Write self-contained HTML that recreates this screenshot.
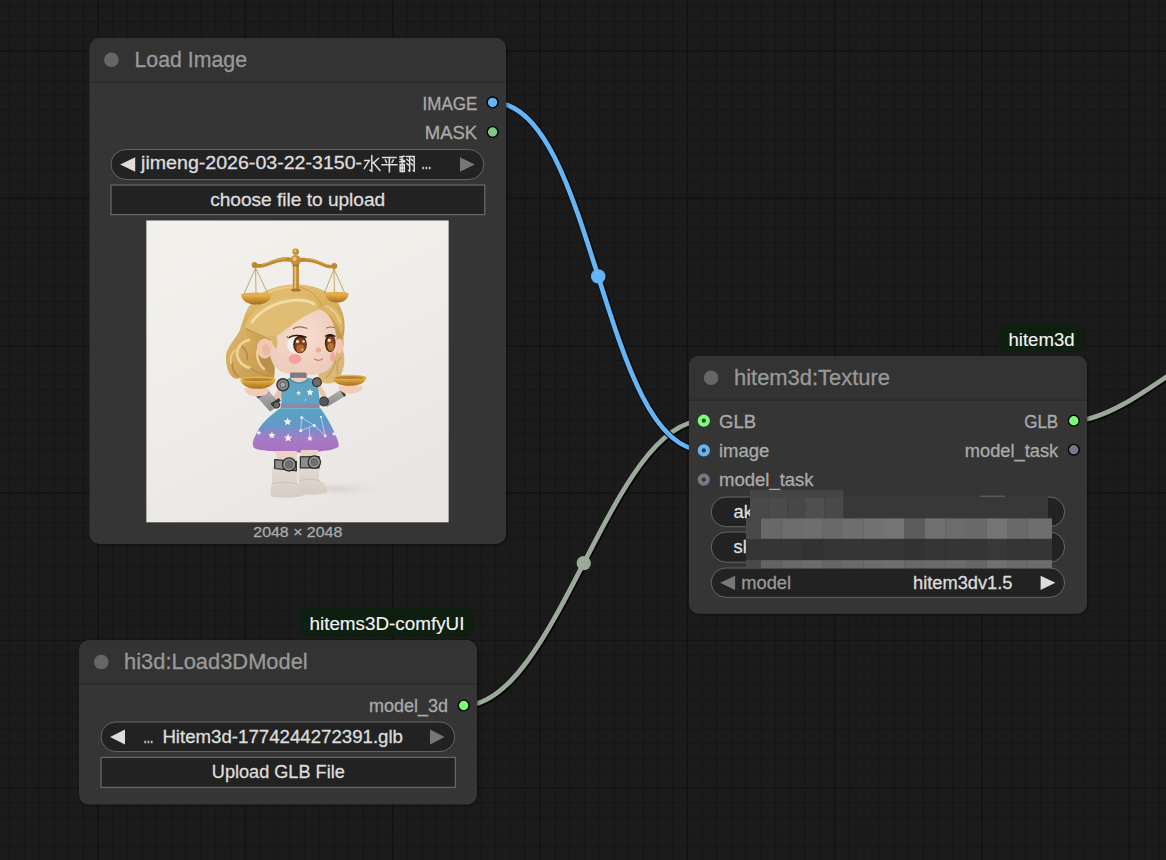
<!DOCTYPE html><html><head><meta charset="utf-8"><style>html,body{margin:0;padding:0;background:#1b1b1b;width:1166px;height:860px;overflow:hidden}svg{display:block}text{font-family:"Liberation Sans", sans-serif}</style></head><body>
<svg width="1166" height="860" viewBox="0 0 1166 860">
<defs><filter id="soft" x="0" y="0" width="100%" height="100%"><feGaussianBlur stdDeviation="0.35"/></filter><filter id="soft2" x="-2%" y="-5%" width="104%" height="110%"><feGaussianBlur stdDeviation="0.6"/></filter><filter id="sh" x="-5%" y="-5%" width="110%" height="110%"><feDropShadow dx="1" dy="1" stdDeviation="1.5" flood-color="#000" flood-opacity="0.55"/></filter></defs>
<rect width="1166" height="860" fill="#1b1b1b"/>
<g><line x1="9.48" y1="0" x2="9.48" y2="860" stroke="#171717" stroke-width="1"/><line x1="24.22" y1="0" x2="24.22" y2="860" stroke="#171717" stroke-width="1"/><line x1="38.95" y1="0" x2="38.95" y2="860" stroke="#171717" stroke-width="1"/><line x1="53.69" y1="0" x2="53.69" y2="860" stroke="#171717" stroke-width="1"/><line x1="68.42" y1="0" x2="68.42" y2="860" stroke="#171717" stroke-width="1"/><line x1="83.16" y1="0" x2="83.16" y2="860" stroke="#171717" stroke-width="1"/><line x1="97.90" y1="0" x2="97.90" y2="860" stroke="#131313" stroke-width="1.6"/><line x1="112.63" y1="0" x2="112.63" y2="860" stroke="#171717" stroke-width="1"/><line x1="127.37" y1="0" x2="127.37" y2="860" stroke="#171717" stroke-width="1"/><line x1="142.10" y1="0" x2="142.10" y2="860" stroke="#171717" stroke-width="1"/><line x1="156.84" y1="0" x2="156.84" y2="860" stroke="#171717" stroke-width="1"/><line x1="171.58" y1="0" x2="171.58" y2="860" stroke="#171717" stroke-width="1"/><line x1="186.31" y1="0" x2="186.31" y2="860" stroke="#171717" stroke-width="1"/><line x1="201.05" y1="0" x2="201.05" y2="860" stroke="#171717" stroke-width="1"/><line x1="215.78" y1="0" x2="215.78" y2="860" stroke="#171717" stroke-width="1"/><line x1="230.52" y1="0" x2="230.52" y2="860" stroke="#171717" stroke-width="1"/><line x1="245.26" y1="0" x2="245.26" y2="860" stroke="#131313" stroke-width="1.6"/><line x1="259.99" y1="0" x2="259.99" y2="860" stroke="#171717" stroke-width="1"/><line x1="274.73" y1="0" x2="274.73" y2="860" stroke="#171717" stroke-width="1"/><line x1="289.46" y1="0" x2="289.46" y2="860" stroke="#171717" stroke-width="1"/><line x1="304.20" y1="0" x2="304.20" y2="860" stroke="#171717" stroke-width="1"/><line x1="318.94" y1="0" x2="318.94" y2="860" stroke="#171717" stroke-width="1"/><line x1="333.67" y1="0" x2="333.67" y2="860" stroke="#171717" stroke-width="1"/><line x1="348.41" y1="0" x2="348.41" y2="860" stroke="#171717" stroke-width="1"/><line x1="363.14" y1="0" x2="363.14" y2="860" stroke="#171717" stroke-width="1"/><line x1="377.88" y1="0" x2="377.88" y2="860" stroke="#171717" stroke-width="1"/><line x1="392.62" y1="0" x2="392.62" y2="860" stroke="#131313" stroke-width="1.6"/><line x1="407.35" y1="0" x2="407.35" y2="860" stroke="#171717" stroke-width="1"/><line x1="422.09" y1="0" x2="422.09" y2="860" stroke="#171717" stroke-width="1"/><line x1="436.82" y1="0" x2="436.82" y2="860" stroke="#171717" stroke-width="1"/><line x1="451.56" y1="0" x2="451.56" y2="860" stroke="#171717" stroke-width="1"/><line x1="466.30" y1="0" x2="466.30" y2="860" stroke="#171717" stroke-width="1"/><line x1="481.03" y1="0" x2="481.03" y2="860" stroke="#171717" stroke-width="1"/><line x1="495.77" y1="0" x2="495.77" y2="860" stroke="#171717" stroke-width="1"/><line x1="510.50" y1="0" x2="510.50" y2="860" stroke="#171717" stroke-width="1"/><line x1="525.24" y1="0" x2="525.24" y2="860" stroke="#171717" stroke-width="1"/><line x1="539.98" y1="0" x2="539.98" y2="860" stroke="#131313" stroke-width="1.6"/><line x1="554.71" y1="0" x2="554.71" y2="860" stroke="#171717" stroke-width="1"/><line x1="569.45" y1="0" x2="569.45" y2="860" stroke="#171717" stroke-width="1"/><line x1="584.18" y1="0" x2="584.18" y2="860" stroke="#171717" stroke-width="1"/><line x1="598.92" y1="0" x2="598.92" y2="860" stroke="#171717" stroke-width="1"/><line x1="613.66" y1="0" x2="613.66" y2="860" stroke="#171717" stroke-width="1"/><line x1="628.39" y1="0" x2="628.39" y2="860" stroke="#171717" stroke-width="1"/><line x1="643.13" y1="0" x2="643.13" y2="860" stroke="#171717" stroke-width="1"/><line x1="657.86" y1="0" x2="657.86" y2="860" stroke="#171717" stroke-width="1"/><line x1="672.60" y1="0" x2="672.60" y2="860" stroke="#171717" stroke-width="1"/><line x1="687.34" y1="0" x2="687.34" y2="860" stroke="#131313" stroke-width="1.6"/><line x1="702.07" y1="0" x2="702.07" y2="860" stroke="#171717" stroke-width="1"/><line x1="716.81" y1="0" x2="716.81" y2="860" stroke="#171717" stroke-width="1"/><line x1="731.54" y1="0" x2="731.54" y2="860" stroke="#171717" stroke-width="1"/><line x1="746.28" y1="0" x2="746.28" y2="860" stroke="#171717" stroke-width="1"/><line x1="761.02" y1="0" x2="761.02" y2="860" stroke="#171717" stroke-width="1"/><line x1="775.75" y1="0" x2="775.75" y2="860" stroke="#171717" stroke-width="1"/><line x1="790.49" y1="0" x2="790.49" y2="860" stroke="#171717" stroke-width="1"/><line x1="805.22" y1="0" x2="805.22" y2="860" stroke="#171717" stroke-width="1"/><line x1="819.96" y1="0" x2="819.96" y2="860" stroke="#171717" stroke-width="1"/><line x1="834.70" y1="0" x2="834.70" y2="860" stroke="#131313" stroke-width="1.6"/><line x1="849.43" y1="0" x2="849.43" y2="860" stroke="#171717" stroke-width="1"/><line x1="864.17" y1="0" x2="864.17" y2="860" stroke="#171717" stroke-width="1"/><line x1="878.90" y1="0" x2="878.90" y2="860" stroke="#171717" stroke-width="1"/><line x1="893.64" y1="0" x2="893.64" y2="860" stroke="#171717" stroke-width="1"/><line x1="908.38" y1="0" x2="908.38" y2="860" stroke="#171717" stroke-width="1"/><line x1="923.11" y1="0" x2="923.11" y2="860" stroke="#171717" stroke-width="1"/><line x1="937.85" y1="0" x2="937.85" y2="860" stroke="#171717" stroke-width="1"/><line x1="952.58" y1="0" x2="952.58" y2="860" stroke="#171717" stroke-width="1"/><line x1="967.32" y1="0" x2="967.32" y2="860" stroke="#171717" stroke-width="1"/><line x1="982.06" y1="0" x2="982.06" y2="860" stroke="#131313" stroke-width="1.6"/><line x1="996.79" y1="0" x2="996.79" y2="860" stroke="#171717" stroke-width="1"/><line x1="1011.53" y1="0" x2="1011.53" y2="860" stroke="#171717" stroke-width="1"/><line x1="1026.26" y1="0" x2="1026.26" y2="860" stroke="#171717" stroke-width="1"/><line x1="1041.00" y1="0" x2="1041.00" y2="860" stroke="#171717" stroke-width="1"/><line x1="1055.74" y1="0" x2="1055.74" y2="860" stroke="#171717" stroke-width="1"/><line x1="1070.47" y1="0" x2="1070.47" y2="860" stroke="#171717" stroke-width="1"/><line x1="1085.21" y1="0" x2="1085.21" y2="860" stroke="#171717" stroke-width="1"/><line x1="1099.94" y1="0" x2="1099.94" y2="860" stroke="#171717" stroke-width="1"/><line x1="1114.68" y1="0" x2="1114.68" y2="860" stroke="#171717" stroke-width="1"/><line x1="1129.42" y1="0" x2="1129.42" y2="860" stroke="#131313" stroke-width="1.6"/><line x1="1144.15" y1="0" x2="1144.15" y2="860" stroke="#171717" stroke-width="1"/><line x1="1158.89" y1="0" x2="1158.89" y2="860" stroke="#171717" stroke-width="1"/><line x1="0" y1="6.80" x2="1166" y2="6.80" stroke="#171717" stroke-width="1"/><line x1="0" y1="21.54" x2="1166" y2="21.54" stroke="#171717" stroke-width="1"/><line x1="0" y1="36.27" x2="1166" y2="36.27" stroke="#171717" stroke-width="1"/><line x1="0" y1="51.01" x2="1166" y2="51.01" stroke="#131313" stroke-width="1.6"/><line x1="0" y1="65.74" x2="1166" y2="65.74" stroke="#171717" stroke-width="1"/><line x1="0" y1="80.48" x2="1166" y2="80.48" stroke="#171717" stroke-width="1"/><line x1="0" y1="95.22" x2="1166" y2="95.22" stroke="#171717" stroke-width="1"/><line x1="0" y1="109.95" x2="1166" y2="109.95" stroke="#171717" stroke-width="1"/><line x1="0" y1="124.69" x2="1166" y2="124.69" stroke="#171717" stroke-width="1"/><line x1="0" y1="139.42" x2="1166" y2="139.42" stroke="#171717" stroke-width="1"/><line x1="0" y1="154.16" x2="1166" y2="154.16" stroke="#171717" stroke-width="1"/><line x1="0" y1="168.90" x2="1166" y2="168.90" stroke="#171717" stroke-width="1"/><line x1="0" y1="183.63" x2="1166" y2="183.63" stroke="#171717" stroke-width="1"/><line x1="0" y1="198.37" x2="1166" y2="198.37" stroke="#131313" stroke-width="1.6"/><line x1="0" y1="213.10" x2="1166" y2="213.10" stroke="#171717" stroke-width="1"/><line x1="0" y1="227.84" x2="1166" y2="227.84" stroke="#171717" stroke-width="1"/><line x1="0" y1="242.58" x2="1166" y2="242.58" stroke="#171717" stroke-width="1"/><line x1="0" y1="257.31" x2="1166" y2="257.31" stroke="#171717" stroke-width="1"/><line x1="0" y1="272.05" x2="1166" y2="272.05" stroke="#171717" stroke-width="1"/><line x1="0" y1="286.78" x2="1166" y2="286.78" stroke="#171717" stroke-width="1"/><line x1="0" y1="301.52" x2="1166" y2="301.52" stroke="#171717" stroke-width="1"/><line x1="0" y1="316.26" x2="1166" y2="316.26" stroke="#171717" stroke-width="1"/><line x1="0" y1="330.99" x2="1166" y2="330.99" stroke="#171717" stroke-width="1"/><line x1="0" y1="345.73" x2="1166" y2="345.73" stroke="#131313" stroke-width="1.6"/><line x1="0" y1="360.46" x2="1166" y2="360.46" stroke="#171717" stroke-width="1"/><line x1="0" y1="375.20" x2="1166" y2="375.20" stroke="#171717" stroke-width="1"/><line x1="0" y1="389.94" x2="1166" y2="389.94" stroke="#171717" stroke-width="1"/><line x1="0" y1="404.67" x2="1166" y2="404.67" stroke="#171717" stroke-width="1"/><line x1="0" y1="419.41" x2="1166" y2="419.41" stroke="#171717" stroke-width="1"/><line x1="0" y1="434.14" x2="1166" y2="434.14" stroke="#171717" stroke-width="1"/><line x1="0" y1="448.88" x2="1166" y2="448.88" stroke="#171717" stroke-width="1"/><line x1="0" y1="463.62" x2="1166" y2="463.62" stroke="#171717" stroke-width="1"/><line x1="0" y1="478.35" x2="1166" y2="478.35" stroke="#171717" stroke-width="1"/><line x1="0" y1="493.09" x2="1166" y2="493.09" stroke="#131313" stroke-width="1.6"/><line x1="0" y1="507.82" x2="1166" y2="507.82" stroke="#171717" stroke-width="1"/><line x1="0" y1="522.56" x2="1166" y2="522.56" stroke="#171717" stroke-width="1"/><line x1="0" y1="537.30" x2="1166" y2="537.30" stroke="#171717" stroke-width="1"/><line x1="0" y1="552.03" x2="1166" y2="552.03" stroke="#171717" stroke-width="1"/><line x1="0" y1="566.77" x2="1166" y2="566.77" stroke="#171717" stroke-width="1"/><line x1="0" y1="581.50" x2="1166" y2="581.50" stroke="#171717" stroke-width="1"/><line x1="0" y1="596.24" x2="1166" y2="596.24" stroke="#171717" stroke-width="1"/><line x1="0" y1="610.98" x2="1166" y2="610.98" stroke="#171717" stroke-width="1"/><line x1="0" y1="625.71" x2="1166" y2="625.71" stroke="#171717" stroke-width="1"/><line x1="0" y1="640.45" x2="1166" y2="640.45" stroke="#131313" stroke-width="1.6"/><line x1="0" y1="655.18" x2="1166" y2="655.18" stroke="#171717" stroke-width="1"/><line x1="0" y1="669.92" x2="1166" y2="669.92" stroke="#171717" stroke-width="1"/><line x1="0" y1="684.66" x2="1166" y2="684.66" stroke="#171717" stroke-width="1"/><line x1="0" y1="699.39" x2="1166" y2="699.39" stroke="#171717" stroke-width="1"/><line x1="0" y1="714.13" x2="1166" y2="714.13" stroke="#171717" stroke-width="1"/><line x1="0" y1="728.86" x2="1166" y2="728.86" stroke="#171717" stroke-width="1"/><line x1="0" y1="743.60" x2="1166" y2="743.60" stroke="#171717" stroke-width="1"/><line x1="0" y1="758.34" x2="1166" y2="758.34" stroke="#171717" stroke-width="1"/><line x1="0" y1="773.07" x2="1166" y2="773.07" stroke="#171717" stroke-width="1"/><line x1="0" y1="787.81" x2="1166" y2="787.81" stroke="#131313" stroke-width="1.6"/><line x1="0" y1="802.54" x2="1166" y2="802.54" stroke="#171717" stroke-width="1"/><line x1="0" y1="817.28" x2="1166" y2="817.28" stroke="#171717" stroke-width="1"/><line x1="0" y1="832.02" x2="1166" y2="832.02" stroke="#171717" stroke-width="1"/><line x1="0" y1="846.75" x2="1166" y2="846.75" stroke="#171717" stroke-width="1"/></g>
<path d="M463.7,705.5 C556.8259395925754,705.5 610.6740604074246,420.7 703.8,420.7" fill="none" stroke="#000" stroke-opacity="0.8" stroke-width="7" transform="translate(0.6,0.6)"/>
<path d="M463.7,705.5 C556.8259395925754,705.5 610.6740604074246,420.7 703.8,420.7" fill="none" stroke="#9AA99A" stroke-width="4.8"/>
<circle cx="583.75" cy="563.10" r="7.2" fill="#9AA99A"/>
<path d="M492.6,102.4 C594.3685609606425,102.4 602.0314390393576,450.4 703.8,450.4" fill="none" stroke="#000" stroke-opacity="0.8" stroke-width="7" transform="translate(0.6,0.6)"/>
<path d="M492.6,102.4 C594.3685609606425,102.4 602.0314390393576,450.4 703.8,450.4" fill="none" stroke="#64B5F6" stroke-width="4.8"/>
<circle cx="598.20" cy="276.40" r="7.2" fill="#64B5F6"/>
<path d="M1073.8,420.7 C1132.8433791800571,420.7 1225.9566208199428,315 1285,315" fill="none" stroke="#000" stroke-opacity="0.8" stroke-width="7" transform="translate(0.6,0.6)"/>
<path d="M1073.8,420.7 C1132.8433791800571,420.7 1225.9566208199428,315 1285,315" fill="none" stroke="#9AA99A" stroke-width="4.8"/>
<g filter="url(#sh)"><rect x="89.5" y="38" width="416.5" height="506" rx="10" fill="#353535"/></g>
<path d="M89.5,82 V48 A10,10 0 0 1 99.5,38 H496.0 A10,10 0 0 1 506.0,48 V82 Z" fill="#333333"/>
<rect x="89.5" y="81.5" width="416.5" height="1.2" fill="#2a2a2a"/>
<circle cx="111.4" cy="59.8" r="7.3" fill="#666666"/>
<text x="134.5" y="66.7" font-size="21.6" fill="#999999" stroke="#999999" stroke-width="0.3" text-anchor="start" textLength="112.5" lengthAdjust="spacingAndGlyphs" >Load Image</text>
<text x="477.4" y="109.6" font-size="18.5" fill="#aaaaaa" stroke="#aaaaaa" stroke-width="0.3" text-anchor="end" textLength="54.8" lengthAdjust="spacingAndGlyphs" >IMAGE</text>
<text x="477.2" y="138.8" font-size="18.5" fill="#aaaaaa" stroke="#aaaaaa" stroke-width="0.3" text-anchor="end" >MASK</text>
<circle cx="492.6" cy="102.4" r="5.4" fill="#64B5F6" stroke="#000" stroke-width="1.4"/>
<circle cx="492.6" cy="132" r="5.4" fill="#81C784" stroke="#000" stroke-width="1.4"/>
<rect x="111" y="149.5" width="372.8" height="30.0" rx="15.0" fill="#222222" stroke="#666666" stroke-width="1"/>
<path d="M120.2,164.45 L135.2,157.2 L135.2,171.7 Z" fill="#dddddd"/>
<path d="M474.8,164.45 L460,157.2 L460,171.7 Z" fill="#777777"/>
<text x="141.1" y="168.9" font-size="17.6" fill="#dddddd" stroke="#dddddd" stroke-width="0.3" text-anchor="start" textLength="221" lengthAdjust="spacingAndGlyphs" >jimeng-2026-03-22-3150-</text>
<g stroke="#dddddd" stroke-width="1.5" fill="none" stroke-linecap="round"><path d="M371.8,155.5 V171.3 L369.8,170.2"/><path d="M364.5,160.6 H369.3 L364.2,168.6"/><path d="M378.6,158.3 L373.2,163.2"/><path d="M373.2,162.4 L380,170.5"/><path d="M382.5,157.4 H396.2"/><path d="M385.3,159.8 L386.6,162.5"/><path d="M393.4,159.8 L392,162.5"/><path d="M381.8,164.8 H397"/><path d="M389.4,157.4 V172"/><path d="M399.8,157 L404.3,156.2"/><path d="M400,159.3 L404.5,160.8"/><path d="M402.1,157.5 V163.2"/><path d="M399.6,161.8 H404.8"/><path d="M400.2,164.5 H404.3 V171.5 H400.2 Z"/><path d="M400.2,168 H404.3"/><path d="M402.2,164.5 V171.5"/><path d="M406.2,156.4 H409.7 V171 L408.6,170.5"/><path d="M406.8,159.3 L408.5,160.8"/><path d="M406.8,163.5 L408.5,165"/><path d="M410.6,156.4 H414.2 V171 L413.2,170.5"/><path d="M411.2,159.3 L412.9,160.8"/><path d="M411.2,163.5 L412.9,165"/></g>
<text x="421.5" y="168.9" font-size="17.6" fill="#dddddd" stroke="#dddddd" stroke-width="0.3" text-anchor="start" textLength="9.8" lengthAdjust="spacingAndGlyphs" >...</text>
<rect x="111" y="185" width="373.7" height="29.599999999999994" fill="#222222" stroke="#666666" stroke-width="1.3"/>
<text x="297.7" y="205.7" font-size="18.3" fill="#dddddd" stroke="#dddddd" stroke-width="0.3" text-anchor="middle" textLength="175" lengthAdjust="spacingAndGlyphs" >choose file to upload</text>
<defs><linearGradient id="bgimg" x1="0" y1="0" x2="0.5" y2="1"><stop offset="0" stop-color="#f2f1ec"/><stop offset="0.55" stop-color="#efede9"/><stop offset="1" stop-color="#e9e6e3"/></linearGradient><linearGradient id="dress" x1="0" y1="0" x2="0" y2="1"><stop offset="0" stop-color="#58a4c4"/><stop offset="0.38" stop-color="#6298c6"/><stop offset="0.66" stop-color="#a47cc6"/><stop offset="1" stop-color="#aa70c0"/></linearGradient><linearGradient id="hairg" x1="0" y1="0" x2="0.3" y2="1"><stop offset="0" stop-color="#e6c47a"/><stop offset="0.55" stop-color="#d8ae5e"/><stop offset="1" stop-color="#c4984e"/></linearGradient><linearGradient id="hairl" x1="0" y1="0" x2="1" y2="1"><stop offset="0" stop-color="#e2bd70"/><stop offset="1" stop-color="#c4964c"/></linearGradient><linearGradient id="gold" x1="0" y1="0" x2="0" y2="1"><stop offset="0" stop-color="#e9b650"/><stop offset="1" stop-color="#a96e1a"/></linearGradient><linearGradient id="boot" x1="0" y1="0" x2="0" y2="1"><stop offset="0" stop-color="#e2dbd4"/><stop offset="1" stop-color="#d6ccc4"/></linearGradient><linearGradient id="arm" x1="0" y1="0" x2="0" y2="1"><stop offset="0" stop-color="#b2b2b2"/><stop offset="1" stop-color="#888888"/></linearGradient><radialGradient id="face" cx="0.5" cy="0.4" r="0.65"><stop offset="0" stop-color="#f6dccd"/><stop offset="1" stop-color="#eccbba"/></radialGradient><radialGradient id="shad" cx="0.5" cy="0.5" r="0.5"><stop offset="0" stop-color="#d5cdcc" stop-opacity="0.85"/><stop offset="1" stop-color="#e8e5e1" stop-opacity="0"/></radialGradient><clipPath id="imgclip"><rect x="146.2" y="220.3" width="302.6" height="302.3"/></clipPath></defs><g clip-path="url(#imgclip)"><rect x="146.2" y="220.3" width="302.6" height="302.3" fill="url(#bgimg)"/><g filter="url(#soft)"><ellipse cx="338" cy="489" rx="52" ry="9" fill="url(#shad)"/><path d="M252,303 C246,310 242,322 240,330 C236,338 228,346 226.2,354 C225.5,362 227,370 230,374 C232,378 236,380 240,378 L274,378 C276,368 274,358 272,350 L270,320 Z" fill="url(#hairl)"/><path d="M256,354 C258,364 266,372 274,376 L274,352 Z" fill="#b88f4c"/><path d="M249,340 C240,342 235,350 238,358 C240,364 246,367 250,368" fill="none" stroke="#f0d696" stroke-width="2.6" stroke-linecap="round"/><path d="M257,352 C257,358 258,364 264,369" fill="none" stroke="#eed290" stroke-width="2.4" stroke-linecap="round"/><path d="M242,346 C246,350 248,355 247,359" fill="none" stroke="#b28844" stroke-width="1.6" stroke-linecap="round"/><path d="M232,362 C232,369 235,374 238,376" fill="none" stroke="#b28844" stroke-width="1.5" stroke-linecap="round"/><path d="M235,350 C231,354 230,359 231,363" fill="none" stroke="#ecd08e" stroke-width="1.8" stroke-linecap="round"/><path d="M250,368 C256,372 262,375 270,376" fill="none" stroke="#b98e48" stroke-width="1.4"/><path d="M337,322 C344,330 345,340 343,350 C346,360 344,372 338,380 C332,385 324,384 318,381 L322,330 Z" fill="#d9b978"/><path d="M341,356 C337,362 336,368 338,374" fill="none" stroke="#c49a58" stroke-width="1.2"/><path d="M336,360 C334,368 330,374 326,378" fill="none" stroke="#c8a062" stroke-width="1.4"/><path d="M252,303 C258,292 276,284.6 296,284.6 C312,284.6 328,290 336,300 C343,309 346,322 344,334 C342,341 339,345 335,347 L272,350 C262,346 246,338 244,326 C243,316 247,308 252,303 Z" fill="url(#hairg)"/><path d="M300,287 C310,290 318,296 322,306" fill="none" stroke="#c0944c" stroke-width="1" opacity="0.8"/><path d="M262,296 C272,289 284,287 296,287" fill="none" stroke="#ecd08c" stroke-width="1.6" opacity="0.9"/><ellipse cx="339.2" cy="346" rx="3.8" ry="7.5" fill="#efc6b6"/><path d="M271,336 C280,324 300,312 320,309 C330,313 336,326 337,342 C337,354 334.5,365 327,370.5 C320,375 308,375.5 298,375 C286,374.5 277,371 273,364 C269,356 268.5,346 271,336 Z" fill="url(#face)"/><ellipse cx="264.8" cy="348.4" rx="8" ry="10" fill="#f1c9b3"/><ellipse cx="266" cy="349.5" rx="4" ry="5.5" fill="#e8b9a2"/><path d="M244.5,327 C249,314 260,304 274,299.5 C288,295.5 304,294.8 314,300.5 C317,303 319,306 319.5,309.5 C310,312.5 301,318 293,324 C285,330 278,336 270.5,339.5 C261,337 251,332 244.5,327 Z" fill="#e0bd75"/><path d="M252,322 C260,311 272,304 288,301 C298,299.5 308,300.5 314,304" fill="none" stroke="#f3dca2" stroke-width="2.8" stroke-linecap="round"/><path d="M246,328.5 C255,333 264,337 270.5,339.5" fill="none" stroke="#bf9450" stroke-width="1.1"/><path d="M319.5,309.5 C325,303.5 333,304 338,311 C343,318 344.5,326 341.5,334 C339,327 334,318 327.5,313.5 C325,311.5 322,310 319.5,309.5 Z" fill="#dcb56c"/><path d="M326,306 C333,309 338,315 340.5,323" fill="none" stroke="#eccf90" stroke-width="1.6" stroke-linecap="round"/><path d="M268.5,336 C271.5,342 274,346 276,349.5 C277.8,346 277.8,340 276.2,335.5 Z" fill="#d8b46c"/><g stroke="#b4863a" stroke-width="0.7" fill="none"><path d="M255.6,268 L244,294 M255.6,268 L256,294 M255.6,268 L268,294"/><path d="M334,269 L324.5,293 M334,269 L334.5,293 M334,269 L344.7,293"/></g><rect x="292.8" y="264" width="6.2" height="26.5" fill="#c28d38"/><rect x="294.4" y="264" width="1.8" height="26.5" fill="#e6c27a"/><ellipse cx="295.9" cy="290" rx="5" ry="1.6" fill="#a87428"/><path d="M254,263.5 C262,266 270,260 281,257.7 C287,256.7 291,257.5 295.7,258.5 C301,257.5 306,257.7 312,258.8 C322,261 328,266.5 334.5,264.5 L334.5,267.8 C327,269.8 321,264.2 312,262.4 C306,261.4 301,261.8 295.7,262.6 C290,261.8 286,261.2 281,261.8 C270,264.2 262,269.8 254,267.2 Z" fill="#c0882e"/><path d="M262,265 C270,261.5 278,259 286,258.6" fill="none" stroke="#e2b86a" stroke-width="0.8"/><path d="M305,258.6 C313,259 320,261.5 328,265" fill="none" stroke="#e2b86a" stroke-width="0.8"/><circle cx="295.7" cy="260.2" r="5.2" fill="#c4903a"/><circle cx="294.6" cy="258.8" r="2.2" fill="#e8c07a"/><rect x="292.5" y="264.5" width="6.5" height="1.8" fill="#a87428"/><circle cx="295.7" cy="251.8" r="3.3" fill="#c4903a"/><circle cx="295" cy="251" r="1.2" fill="#e8c07a"/><circle cx="254.6" cy="265" r="2.9" fill="#c0882e"/><circle cx="334.3" cy="266" r="2.9" fill="#c0882e"/><path d="M241,294.5 C242,302 249,304.5 256.3,304.5 C264,304.5 270,302 271.8,294.5 Z" fill="url(#gold)"/><ellipse cx="256.4" cy="294.6" rx="15.4" ry="2" fill="#e4ae4c"/><path d="M325,293.5 C326,300 331,302.6 337,302.6 C343,302.6 348,300 348.6,293.5 Z" fill="url(#gold)"/><ellipse cx="336.8" cy="293.6" rx="11.8" ry="1.8" fill="#e4ae4c"/><path d="M292.8,329 C296,326.6 302,326.4 307.5,328.4" fill="none" stroke="#9b6c4c" stroke-width="1.1"/><path d="M326.3,328.2 C329,326.6 332,326.8 334.7,327.8" fill="none" stroke="#9b6c4c" stroke-width="1.1"/><ellipse cx="296.8" cy="344.5" rx="9.6" ry="9.2" fill="#f4f0ee"/><ellipse cx="300" cy="344.5" rx="6.8" ry="8.8" fill="#3f1f0c"/><ellipse cx="300.3" cy="345.2" rx="5.6" ry="7.6" fill="#86401a"/><ellipse cx="300.5" cy="348.4" rx="4" ry="4" fill="#b4682a"/><circle cx="297.5" cy="341.4" r="1.5" fill="#ffffff"/><circle cx="303.6" cy="341.4" r="1.2" fill="#ffffff"/><circle cx="302.3" cy="349.5" r="0.9" fill="#f0d0b0"/><path d="M288.8,337.8 C292,335 300,334.5 306.5,337.5" fill="none" stroke="#2a1408" stroke-width="1.4"/><path d="M288.6,338 L286.8,336.6" stroke="#2a1408" stroke-width="0.9"/><ellipse cx="330.2" cy="343.1" rx="5.3" ry="9" fill="#3f1f0c"/><ellipse cx="330.6" cy="343.8" rx="4.2" ry="7.4" fill="#8a4a1e"/><ellipse cx="330.8" cy="346.8" rx="3" ry="4" fill="#b8722e"/><circle cx="329.2" cy="340.2" r="1.5" fill="#ffffff"/><path d="M325,336.5 C328,334 332,334.2 335.5,336.5" fill="none" stroke="#2a1408" stroke-width="1.3"/><ellipse cx="294.9" cy="358.9" rx="6.3" ry="5" fill="#f3a09e" opacity="0.92"/><ellipse cx="332.6" cy="356.8" rx="2.4" ry="4.9" fill="#f3a09e" opacity="0.85"/><ellipse cx="318.5" cy="350" rx="2.8" ry="2.5" fill="#efad98"/><path d="M314,358.6 C316.5,360.8 320.3,360.8 322.8,358.8" fill="none" stroke="#b0584a" stroke-width="0.9"/><rect x="290" y="372.5" width="16.8" height="6" rx="1.5" fill="#7c7c82"/><path d="M279.5,387 C276,393 272,398 271.5,402 L278,405 C279,400 283,394 286,389 Z" fill="#ecc4ad"/><path d="M314,385 C318,389 321,394 322,399 L327,397 C325,392 322,387 318,383 Z" fill="#ecc4ad"/><path d="M256,396 L267.5,389.8 L281,404.5 L270,411.5 Z" fill="url(#arm)"/><path d="M256,396 L267.5,389.8 L269.5,392 L258,398.4 Z" fill="#3c3c3c"/><path d="M270.5,403.5 L279,398 L280.8,401 L272.3,406.5 Z" fill="#3a3a3a"/><circle cx="276.5" cy="405" r="3.2" fill="#6a6a6a" stroke="#303030" stroke-width="1"/><path d="M322.5,401.5 L342,389 L346,395.5 L327,407 Z" fill="url(#arm)"/><path d="M340,390.2 L342,389 L346,395.5 L344,396.7 Z" fill="#3c3c3c"/><circle cx="323.8" cy="401.5" r="4.5" fill="#585858" stroke="#2e2e2e" stroke-width="1.2"/><path d="M282.5,380.5 C290,377 308,376.5 316,380 C318.5,388 319.8,397 319.6,405 L281.6,405 C281,397 281.5,388 282.5,380.5 Z" fill="#5ea4c2"/><path d="M290.5,378 C294,383.5 304,383.5 307.5,378 Z" fill="#f0cdb8"/><path d="M289,378.2 C293,385 305,385 309,378.2" fill="none" stroke="#4e8fb0" stroke-width="1.3"/><polygon points="310.00,388.70 311.01,391.12 313.61,391.33 311.63,393.03 312.23,395.57 310.00,394.21 307.77,395.57 308.37,393.03 306.39,391.33 308.99,391.12" fill="#f4f2f8"/><polygon points="298.60,390.40 299.29,392.05 301.07,392.20 299.71,393.36 300.13,395.10 298.60,394.17 297.07,395.10 297.49,393.36 296.13,392.20 297.91,392.05" fill="#f4f2f8"/><circle cx="305.5" cy="400" r="0.7" fill="#f4f2f8"/><circle cx="282.9" cy="384.8" r="6" fill="#888888" stroke="#333333" stroke-width="1.4"/><circle cx="282.9" cy="384.8" r="2.8" fill="#a6a6a6" stroke="#555" stroke-width="0.8"/><circle cx="316.9" cy="382.2" r="4.4" fill="#6c6c6c" stroke="#333333" stroke-width="1.3"/><path d="M280.8,403.5 L319.5,403.5 L319.8,408.2 L280.6,408.2 Z" fill="#8a8aa8"/><path d="M280.3,408.2 L320.5,408.2 C326,416 332,426 336,436 C338,441 339.5,445 338.3,447 C333,450 328,450.5 323.7,450.8 C316,452.5 306,452.6 298.6,452.4 C290,452.6 280,452 271.4,451 C264,450.5 256,449.5 253.6,447.4 C251.8,444 253,440 255.7,434.9 C259,427 266,418 280.3,408.2 Z" fill="url(#dress)"/><path d="M300,410 L299,452" stroke="#5a8fb4" stroke-width="0.6" opacity="0.5"/><polygon points="287.60,417.60 288.71,420.27 291.59,420.50 289.40,422.38 290.07,425.20 287.60,423.69 285.13,425.20 285.80,422.38 283.61,420.50 286.49,420.27" fill="#f4f2f8"/><polygon points="271.90,431.60 272.91,434.02 275.51,434.23 273.53,435.93 274.13,438.47 271.90,437.11 269.67,438.47 270.27,435.93 268.29,434.23 270.89,434.02" fill="#f4f2f8"/><polygon points="288.10,433.60 289.26,436.40 292.28,436.64 289.98,438.61 290.69,441.56 288.10,439.98 285.51,441.56 286.22,438.61 283.92,436.64 286.94,436.40" fill="#f4f2f8"/><polygon points="258.80,430.20 259.49,431.85 261.27,432.00 259.91,433.16 260.33,434.90 258.80,433.97 257.27,434.90 257.69,433.16 256.33,432.00 258.11,431.85" fill="#f4f2f8"/><polygon points="310.00,435.50 310.79,437.41 312.85,437.57 311.28,438.92 311.76,440.93 310.00,439.85 308.24,440.93 308.72,438.92 307.15,437.57 309.21,437.41" fill="#f4f2f8"/><polygon points="334.10,431.40 334.73,432.93 336.38,433.06 335.13,434.13 335.51,435.74 334.10,434.88 332.69,435.74 333.07,434.13 331.82,433.06 333.47,432.93" fill="#f4f2f8"/><g stroke="#efeaf5" stroke-width="0.6" fill="none"><path d="M301.7,417.6 L314.3,425.4 L300.7,430.7 Z M314.3,425.4 L325.3,435.9 M309,428 L310,437 M321,417 L325.3,435.9"/></g><g fill="#f4f2f8"><circle cx="301.7" cy="417.6" r="1.4"/><circle cx="314.3" cy="425.4" r="1.5"/><circle cx="300.7" cy="430.7" r="1.5"/><circle cx="321" cy="417" r="1.1"/><circle cx="325.3" cy="435.9" r="1.3"/></g><path d="M244.2,389 C250,386.5 262,386.8 269.3,389 C270,393 265,396.4 257,396.4 C250,396.4 245,393.5 244.2,389 Z" fill="#f1ccb7"/><path d="M338.4,386 C345,384.5 356,384.6 362.7,386 C363,390.5 358,393.7 349,393.7 C343,393.7 338.8,391 338.4,386 Z" fill="#f1ccb7"/><path d="M240.2,379.5 C241.5,385.5 248,388.8 257.8,388.8 C267,388.8 274,385.5 275.6,379.5 Z" fill="url(#gold)"/><ellipse cx="257.9" cy="379.2" rx="17.7" ry="2.6" fill="#e8b450"/><ellipse cx="257.9" cy="379.6" rx="15" ry="1.6" fill="#b5862e"/><path d="M332.3,377.5 C333.5,383.5 341,385.8 349.4,385.8 C358,385.8 365,383.5 366.4,377.5 Z" fill="url(#gold)"/><ellipse cx="349.4" cy="377.3" rx="17" ry="2.6" fill="#e8b450"/><ellipse cx="349.4" cy="377.7" rx="14.5" ry="1.6" fill="#b5862e"/><rect x="276.2" y="451" width="20.6" height="11" fill="#ecd2c4"/><rect x="301" y="450" width="17" height="9" fill="#ecd2c4"/><path d="M272.1,466 L296.8,466 L297.5,483.5 C302.5,485.5 304.5,490.5 304,495 C300,498.3 280,498.3 271.5,496.5 C269.8,493 270.2,487 272.1,483.5 Z" fill="url(#boot)"/><path d="M272.2,483.8 C280,481.5 292,482 298,484.5" fill="none" stroke="#c7bdb5" stroke-width="0.8"/><path d="M298.4,463 L318.4,463 L319.2,480.5 C324.5,482 327.2,487.5 326.7,492 C323,494.8 308,495.2 300,494.2 C299,488 298.4,478 298.4,463 Z" fill="url(#boot)"/><path d="M300,480.5 C307,478.6 315,479 320,481" fill="none" stroke="#c7bdb5" stroke-width="0.8"/><path d="M274.7,459.6 L296.3,461.5 L296.3,470.9 L274.7,468.5 Z" fill="#8e8e8e" stroke="#2c2c2c" stroke-width="1.2"/><circle cx="289.1" cy="464.4" r="6.6" fill="#9a9a9a" stroke="#2c2c2c" stroke-width="1.3"/><circle cx="289.1" cy="464.4" r="3.9" fill="#707070" stroke="#555" stroke-width="0.6"/><path d="M300.4,456.8 L319,456.5 L319,467.8 L300.4,467.8 Z" fill="#8e8e8e" stroke="#2c2c2c" stroke-width="1.2"/><circle cx="314.3" cy="462.1" r="6.2" fill="#9a9a9a" stroke="#2c2c2c" stroke-width="1.3"/><circle cx="314.3" cy="462.1" r="3.5" fill="#707070" stroke="#555" stroke-width="0.6"/></g></g>
<text x="297.8" y="537" font-size="14.6" fill="#aaaaaa" stroke="#aaaaaa" stroke-width="0.3" text-anchor="middle" textLength="89" lengthAdjust="spacingAndGlyphs" >2048 × 2048</text>
<rect x="999.7" y="323.6" width="84.39999999999986" height="29.19999999999999" rx="8" fill="#0f1f0f"/>
<text x="1008.5" y="346.2" font-size="18" fill="#f4f4f4" stroke="#f4f4f4" stroke-width="0.12" textLength="66.09999999999991" lengthAdjust="spacingAndGlyphs">hitem3d</text>
<g filter="url(#sh)"><rect x="689" y="356" width="398" height="257.8" rx="10" fill="#353535"/></g>
<path d="M689,400 V366 A10,10 0 0 1 699,356 H1077 A10,10 0 0 1 1087,366 V400 Z" fill="#333333"/>
<rect x="689" y="399.5" width="398" height="1.2" fill="#2a2a2a"/>
<circle cx="711.1" cy="377.8" r="7.3" fill="#666666"/>
<text x="734" y="385" font-size="21.6" fill="#999999" stroke="#999999" stroke-width="0.3" text-anchor="start" textLength="156" lengthAdjust="spacingAndGlyphs" >hitem3d:Texture</text>
<circle cx="703.8" cy="420.7" r="4.1" fill="none" stroke="#77FF77" stroke-width="4"/>
<circle cx="703.8" cy="450.4" r="4.1" fill="none" stroke="#64B5F6" stroke-width="4"/>
<circle cx="703.8" cy="479.6" r="4.1" fill="none" stroke="#777788" stroke-width="4"/>
<text x="719" y="427.6" font-size="18.5" fill="#aaaaaa" stroke="#aaaaaa" stroke-width="0.3" text-anchor="start" >GLB</text>
<text x="719" y="457" font-size="18.5" fill="#aaaaaa" stroke="#aaaaaa" stroke-width="0.3" text-anchor="start" >image</text>
<text x="719" y="486.2" font-size="18.5" fill="#aaaaaa" stroke="#aaaaaa" stroke-width="0.3" text-anchor="start" >model_task</text>
<text x="1058.2" y="427.6" font-size="18.5" fill="#aaaaaa" stroke="#aaaaaa" stroke-width="0.3" text-anchor="end" textLength="34" lengthAdjust="spacingAndGlyphs" >GLB</text>
<text x="1058.2" y="456.5" font-size="18.5" fill="#aaaaaa" stroke="#aaaaaa" stroke-width="0.3" text-anchor="end" textLength="93.4" lengthAdjust="spacingAndGlyphs" >model_task</text>
<circle cx="1073.8" cy="420.7" r="5.4" fill="#77FF77" stroke="#000" stroke-width="1.4"/>
<circle cx="1073.8" cy="449.8" r="5.4" fill="#777788" stroke="#000" stroke-width="1.4"/>
<rect x="711.2" y="497" width="353.39999999999986" height="29.700000000000045" rx="14.850000000000023" fill="#222222" stroke="#666666" stroke-width="1"/>
<rect x="711.2" y="532" width="353.39999999999986" height="30.200000000000045" rx="15.100000000000023" fill="#222222" stroke="#666666" stroke-width="1"/>
<rect x="711.2" y="568" width="353.39999999999986" height="29.299999999999955" rx="14.649999999999977" fill="#222222" stroke="#666666" stroke-width="1"/>
<text x="733.6" y="517.8" font-size="18.3" fill="#dddddd" stroke="#dddddd" stroke-width="0.3" text-anchor="start" >ak</text>
<text x="733.6" y="552.5" font-size="18.3" fill="#dddddd" stroke="#dddddd" stroke-width="0.3" text-anchor="start" >sk</text>
<path d="M720.1,582.85 L735.1,575.7 L735.1,590 Z" fill="#777777"/>
<text x="741.3" y="588.5" font-size="18.3" fill="#999999" stroke="#999999" stroke-width="0.3" text-anchor="start" >model</text>
<text x="1012.5" y="588.5" font-size="18.3" fill="#dddddd" stroke="#dddddd" stroke-width="0.3" text-anchor="end" textLength="99.5" lengthAdjust="spacingAndGlyphs" >hitem3dv1.5</text>
<path d="M1055.4,582.85 L1040.6,575.7 L1040.6,590 Z" fill="#dddddd"/>
<g id="mos" filter="url(#soft2)"><rect x="843" y="496" width="205" height="22" fill="#383838"/><rect x="980" y="495.6" width="25" height="1.4" fill="#5a5a5a"/><rect x="750.0" y="490" width="18.8" height="8" fill="#444444"/><rect x="750.0" y="498" width="18.8" height="20.5" fill="#484848"/><rect x="768.6" y="490" width="18.8" height="8" fill="#444444"/><rect x="768.6" y="498" width="18.8" height="20.5" fill="#4c4c4c"/><rect x="787.2" y="490" width="18.8" height="8" fill="#444444"/><rect x="787.2" y="498" width="18.8" height="20.5" fill="#464646"/><rect x="805.8" y="490" width="18.8" height="8" fill="#444444"/><rect x="805.8" y="498" width="18.8" height="20.5" fill="#505050"/><rect x="824.4" y="490" width="18.8" height="8" fill="#444444"/><rect x="824.4" y="498" width="18.8" height="20.5" fill="#4a4a4a"/><rect x="746" y="518" width="15" height="50" fill="#4a4a4a"/><rect x="746" y="539" width="15" height="21" fill="#363636"/><rect x="761.0" y="518.3" width="20.7" height="20.6" fill="#686868"/><rect x="761.0" y="538.9" width="20.7" height="21.2" fill="#343434"/><rect x="761.0" y="560.1" width="20.7" height="8" fill="#646464"/><rect x="781.5" y="518.3" width="20.7" height="20.6" fill="#6c6c6c"/><rect x="781.5" y="538.9" width="20.7" height="21.2" fill="#363636"/><rect x="781.5" y="560.1" width="20.7" height="8" fill="#686868"/><rect x="802.0" y="518.3" width="20.7" height="20.6" fill="#6e6e6e"/><rect x="802.0" y="538.9" width="20.7" height="21.2" fill="#333333"/><rect x="802.0" y="560.1" width="20.7" height="8" fill="#6c6c6c"/><rect x="822.5" y="518.3" width="20.7" height="20.6" fill="#6a6a6a"/><rect x="822.5" y="538.9" width="20.7" height="21.2" fill="#353535"/><rect x="822.5" y="560.1" width="20.7" height="8" fill="#666666"/><rect x="843.0" y="518.3" width="20.7" height="20.6" fill="#6e6e6e"/><rect x="843.0" y="538.9" width="20.7" height="21.2" fill="#343434"/><rect x="843.0" y="560.1" width="20.7" height="8" fill="#6a6a6a"/><rect x="863.5" y="518.3" width="20.7" height="20.6" fill="#727272"/><rect x="863.5" y="538.9" width="20.7" height="21.2" fill="#363636"/><rect x="863.5" y="560.1" width="20.7" height="8" fill="#6c6c6c"/><rect x="884.0" y="518.3" width="20.7" height="20.6" fill="#747474"/><rect x="884.0" y="538.9" width="20.7" height="21.2" fill="#353535"/><rect x="884.0" y="560.1" width="20.7" height="8" fill="#6e6e6e"/><rect x="904.5" y="518.3" width="20.7" height="20.6" fill="#5c5c5c"/><rect x="904.5" y="538.9" width="20.7" height="21.2" fill="#333333"/><rect x="904.5" y="560.1" width="20.7" height="8" fill="#686868"/><rect x="925.0" y="518.3" width="20.7" height="20.6" fill="#707070"/><rect x="925.0" y="538.9" width="20.7" height="21.2" fill="#363636"/><rect x="925.0" y="560.1" width="20.7" height="8" fill="#6a6a6a"/><rect x="945.5" y="518.3" width="20.7" height="20.6" fill="#6c6c6c"/><rect x="945.5" y="538.9" width="20.7" height="21.2" fill="#343434"/><rect x="945.5" y="560.1" width="20.7" height="8" fill="#6c6c6c"/><rect x="966.0" y="518.3" width="20.7" height="20.6" fill="#6a6a6a"/><rect x="966.0" y="538.9" width="20.7" height="21.2" fill="#353535"/><rect x="966.0" y="560.1" width="20.7" height="8" fill="#666666"/><rect x="986.5" y="518.3" width="20.7" height="20.6" fill="#757575"/><rect x="986.5" y="538.9" width="20.7" height="21.2" fill="#373737"/><rect x="986.5" y="560.1" width="20.7" height="8" fill="#707070"/><rect x="1007.0" y="518.3" width="20.7" height="20.6" fill="#6a6a6a"/><rect x="1007.0" y="538.9" width="20.7" height="21.2" fill="#343434"/><rect x="1007.0" y="560.1" width="20.7" height="8" fill="#6a6a6a"/><rect x="1027.5" y="518.3" width="24.5" height="20.6" fill="#6e6e6e"/><rect x="1027.5" y="538.9" width="24.5" height="21.2" fill="#363636"/><rect x="1027.5" y="560.1" width="24.5" height="8" fill="#6c6c6c"/></g>
<rect x="300.5" y="607.8" width="173.3" height="28.90000000000009" rx="8" fill="#0f1f0f"/>
<text x="309.5" y="630.2" font-size="18" fill="#f4f4f4" stroke="#f4f4f4" stroke-width="0.12" textLength="154.89999999999998" lengthAdjust="spacingAndGlyphs">hitems3D-comfyUI</text>
<g filter="url(#sh)"><rect x="79" y="640.3" width="398" height="164.3" rx="10" fill="#353535"/></g>
<path d="M79,684.3 V650.3 A10,10 0 0 1 89,640.3 H467 A10,10 0 0 1 477,650.3 V684.3 Z" fill="#333333"/>
<rect x="79" y="683.8" width="398" height="1.2" fill="#2a2a2a"/>
<circle cx="101.3" cy="662" r="7.3" fill="#666666"/>
<text x="124.1" y="668.6" font-size="21.6" fill="#999999" stroke="#999999" stroke-width="0.3" text-anchor="start" textLength="183.6" lengthAdjust="spacingAndGlyphs" >hi3d:Load3DModel</text>
<text x="448" y="711.8" font-size="18.5" fill="#aaaaaa" stroke="#aaaaaa" stroke-width="0.3" text-anchor="end" textLength="79" lengthAdjust="spacingAndGlyphs" >model_3d</text>
<circle cx="463.7" cy="705.5" r="5.4" fill="#77FF77" stroke="#000" stroke-width="1.4"/>
<rect x="101" y="722" width="353.7" height="29.600000000000023" rx="14.800000000000011" fill="#222222" stroke="#666666" stroke-width="1"/>
<path d="M110.1,737.0 L125,729.5 L125,744.5 Z" fill="#dddddd"/>
<path d="M444.6,737.0 L430,729.5 L430,744.5 Z" fill="#777777"/>
<text x="143.5" y="743.2" font-size="17.6" fill="#dddddd" stroke="#dddddd" stroke-width="0.3" text-anchor="start" textLength="9.8" lengthAdjust="spacingAndGlyphs" >...</text>
<text x="162.4" y="743.2" font-size="18.3" fill="#dddddd" stroke="#dddddd" stroke-width="0.3" text-anchor="start" textLength="240.6" lengthAdjust="spacingAndGlyphs" >Hitem3d-1774244272391.glb</text>
<rect x="101" y="757.4" width="354.4" height="30.0" fill="#222222" stroke="#666666" stroke-width="1.3"/>
<text x="278.3" y="777.5" font-size="18.3" fill="#dddddd" stroke="#dddddd" stroke-width="0.3" text-anchor="middle" textLength="133" lengthAdjust="spacingAndGlyphs" >Upload GLB File</text>
</svg></body></html>
